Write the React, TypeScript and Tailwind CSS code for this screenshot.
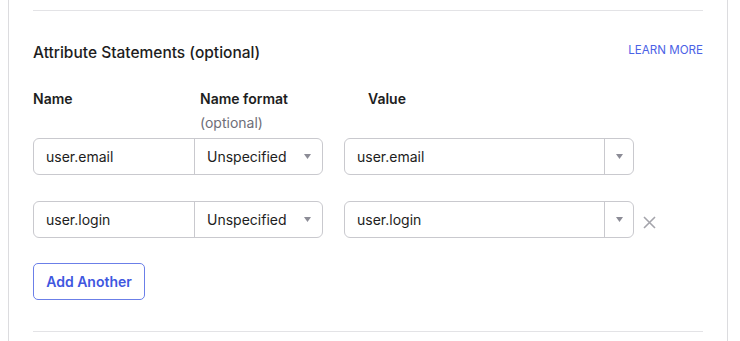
import React from 'react';

const Caret: React.FC = () => (
  <svg width="7" height="5" viewBox="0 0 7 5" className="block">
    <path d="M0 0 H7 L3.5 5 Z" fill="#8c8c96" />
  </svg>
);

const AttributeRow: React.FC<{ name: string; value: string; removable?: boolean }> = ({ name, value, removable }) => (
  <div className="flex items-center">
    <div className="flex h-[37px] w-[290px] rounded-[6px] border border-[#c9c9ce]">
      <div className="flex w-[161px] items-center border-r border-[#c9c9ce] pl-[12px] text-[14px] text-[#1d1d21]">{name}</div>
      <div className="flex flex-1 items-center justify-between pl-[12px] pr-[11px] text-[14px] text-[#1d1d21]">
        <span>Unspecified</span>
        <Caret />
      </div>
    </div>
    <div className="ml-[21px] flex h-[37px] w-[290px] rounded-[6px] border border-[#c9c9ce]">
      <div className="flex flex-1 items-center border-r border-[#c9c9ce] pl-[12px] text-[14px] text-[#1d1d21]">{value}</div>
      <div className="flex w-[28px] items-center justify-center">
        <Caret />
      </div>
    </div>
    {removable && (
      <button className="ml-[9px] mt-[5px] text-[#a4a4ab]" aria-label="Remove">
        <svg width="13" height="13" viewBox="0 0 13 13" className="block">
          <path d="M1 1 L12 12 M12 1 L1 12" stroke="currentColor" strokeWidth="1.6" />
        </svg>
      </button>
    )}
  </div>
);

export default function App() {
  return (
    <div className="h-[341px] w-[740px] overflow-hidden bg-white" style={{ fontFamily: 'Inter, "Noto Sans", sans-serif' }}>
      <div className="ml-[8px] h-full w-[720px] border-x border-[#dcdcdf] pl-[24px] pr-[24px] pt-[10px]">
        <div className="border-t border-[#e3e3e6]" />

        <div className="mt-[30px] flex items-start justify-between">
          <h2 className="pt-[1px] text-[15.5px] font-medium leading-[22px] text-[#1d1d21]">Attribute Statements (optional)</h2>
          <a href="#" className="text-[11.6px] leading-[18px] text-[#4b62e6]">LEARN MORE</a>
        </div>

        <div className="mt-[25px] flex text-[14px] font-semibold leading-[20px] text-[#1d1d21]">
          <div className="w-[167px]">Name</div>
          <div className="w-[168px]">
            <div>Name format</div>
            <div className="mt-[4px] font-normal text-[#6e6e78]">(optional)</div>
          </div>
          <div>Value</div>
        </div>

        <div className="mt-[5px] flex flex-col gap-[26px]">
          <AttributeRow name="user.email" value="user.email" />
          <AttributeRow name="user.login" value="user.login" removable />
        </div>

        <button className="mt-[25px] h-[37px] w-[112px] rounded-[5px] border border-[#6b7fe8] text-[14px] font-semibold text-[#3f57e0]">
          Add Another
        </button>

        <div className="mt-[31px] border-t border-[#e3e3e6]" />
      </div>
    </div>
  );
}
